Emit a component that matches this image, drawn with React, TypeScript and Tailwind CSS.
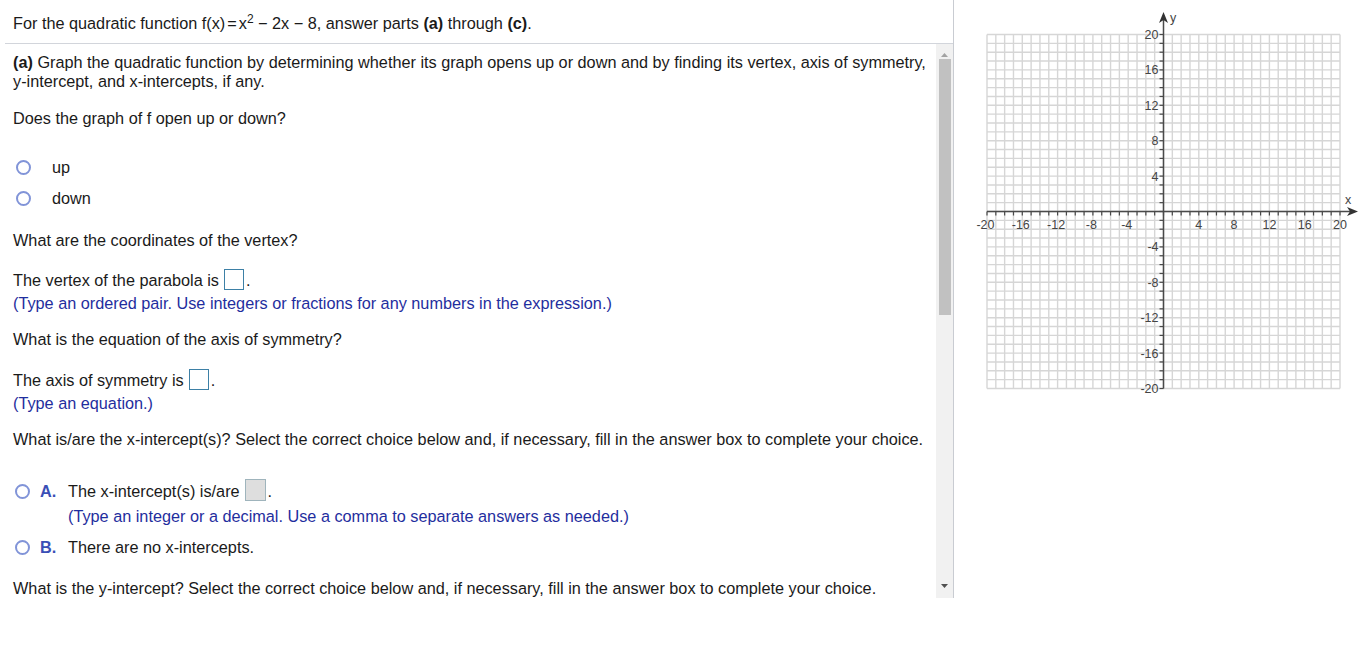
import React from "react";

const U = 8.825;
const OX = 209.5;
const OY = 211.5;
const UY = 8.85;
const gx = (v: number) => OX + v * U;
const gy = (v: number) => OY - v * UY;

function Graph() {
  const range: number[] = [];
  for (let i = -20; i <= 20; i++) range.push(i);
  const xl = [-20, -16, -12, -8, -4, 4, 8, 12, 16, 20];
  return (
    <svg width="404" height="400" viewBox="0 0 404 400" className="block shrink-0">
      {range.map((i) => (
        <line key={"v" + i} x1={gx(i)} y1={gy(20)} x2={gx(i)} y2={gy(-20)} stroke="#d6d6d6" strokeWidth={1.4} />
      ))}
      {range.map((i) => (
        <line key={"h" + i} x1={gx(-20)} y1={gy(i)} x2={gx(20)} y2={gy(i)} stroke="#d6d6d6" strokeWidth={1.4} />
      ))}
      <line x1={gx(0)} y1={gy(-20)} x2={gx(0)} y2={18} stroke="#4a4a4a" strokeWidth={1.5} />
      <polygon points={`${gx(0)},12 ${gx(0) - 4.5},23 ${gx(0)},20 ${gx(0) + 4.5},23`} fill="#333" />
      <line x1={gx(-20)} y1={gy(0)} x2={398} y2={gy(0)} stroke="#4a4a4a" strokeWidth={1.5} />
      <polygon points={`404,${gy(0)} 393,${gy(0) - 4.5} 396,${gy(0)} 393,${gy(0) + 4.5}`} fill="#333" />
      {range.map((i) => (
        <line key={"tx" + i} x1={gx(i)} y1={gy(0)} x2={gx(i)} y2={gy(0) + 4} stroke="#4a4a4a" strokeWidth={1.2} />
      ))}
      {range.map((i) => (
        <line key={"ty" + i} x1={gx(0) - 4} y1={gy(i)} x2={gx(0)} y2={gy(i)} stroke="#4a4a4a" strokeWidth={1.2} />
      ))}
      {xl.map((v) => (
        <text
          key={"lx" + v}
          x={gx(v) - (v < 0 ? 1.5 : 0)}
          y={gy(0) + 17.5}
          textAnchor="middle"
          fontSize="12.5"
          fill="#444"
          fontFamily="'Liberation Sans', Arial, sans-serif"
        >
          {v}
        </text>
      ))}
      {xl.map((v) => (
        <text
          key={"ly" + v}
          x={gx(0) - 5}
          y={gy(v) + 4.5}
          textAnchor="end"
          fontSize="12.5"
          fill="#444"
          fontFamily="'Liberation Sans', Arial, sans-serif"
        >
          {v}
        </text>
      ))}
      <text x={394} y={204} textAnchor="middle" fontSize="12.5" fill="#444" fontFamily="'Liberation Sans', Arial, sans-serif">
        x
      </text>
      <text x={219} y={22} textAnchor="middle" fontSize="12.5" fill="#444" fontFamily="'Liberation Sans', Arial, sans-serif">
        y
      </text>
    </svg>
  );
}

function Radio() {
  return <span className="block w-[15px] h-[15px] rounded-full border-2 border-[#8194d8] bg-white shrink-0" />;
}

function AnswerBox() {
  return <span className="inline-block w-[20px] h-[21px] border border-[#3d80a6] bg-white -mt-[2px] ml-[5px] shrink-0" />;
}

export default function App() {
  return (
    <div className="flex w-[1358px] h-[662px] bg-white font-['Liberation_Sans',Arial,sans-serif] text-[16.25px] leading-[19px] text-[#1a1a1a]">
      <div className="w-[954px] h-[598px] border-r border-[#c9ccd2] flex flex-col shrink-0">
        <div className="h-[43px] pt-[14px] pl-[13px] whitespace-nowrap">
          For the quadratic function f(x)<span className="mx-[2px]">=</span>x<sup className="text-[12px]">2</sup> − 2x − 8, answer parts <b>(a)</b> through <b>(c)</b>.
        </div>
        <div className="ml-[5px] border-t border-[#d2d5db] flex flex-1 min-h-0">
          <div className="flex-1 pl-[8px] pt-[9px] flex flex-col whitespace-nowrap">
            <div>
              <b>(a)</b> Graph the quadratic function by determining whether its graph opens up or down and by finding its vertex, axis of symmetry,
              <br />
              y-intercept, and x-intercepts, if any.
            </div>
            <div className="mt-[18px]">Does the graph of f open up or down?</div>
            <div className="mt-[30px] flex items-center h-[19px]">
              <span className="ml-[3px]"><Radio /></span>
              <span className="ml-[21px]">up</span>
            </div>
            <div className="mt-[12px] flex items-center h-[19px]">
              <span className="ml-[3px]"><Radio /></span>
              <span className="ml-[21px]">down</span>
            </div>
            <div className="mt-[23px]">What are the coordinates of the vertex?</div>
            <div className="mt-[21px] flex items-start h-[19px]">
              <span>The vertex of the parabola is</span>
              <AnswerBox />
              <span className="ml-[2px]">.</span>
            </div>
            <div className="mt-[4px] text-[#1f2e9e]">(Type an ordered pair. Use integers or fractions for any numbers in the expression.)</div>
            <div className="mt-[17px]">What is the equation of the axis of symmetry?</div>
            <div className="mt-[22px] flex items-start h-[19px]">
              <span>The axis of symmetry is</span>
              <AnswerBox />
              <span className="ml-[2px]">.</span>
            </div>
            <div className="mt-[4px] text-[#1f2e9e]">(Type an equation.)</div>
            <div className="mt-[17px]">
              What is/are the x-intercept(s)? Select the correct choice below and, if necessary, fill in the answer box to complete your choice.
            </div>
            <div className="mt-[33px] flex items-start h-[19px]">
              <span className="ml-[2px] mt-[2px]"><Radio /></span>
              <span className="ml-[10px] w-[28px] font-bold text-[#3a4fb6]">A.</span>
              <span>The x-intercept(s) is/are</span>
              <span className="inline-block w-[21px] h-[22px] border border-[#9fb4bc] bg-[#dedede] -mt-[3px] ml-[5px] shrink-0" />
              <span className="ml-[2px]">.</span>
            </div>
            <div className="mt-[6px] pl-[55px] text-[#1f2e9e]">(Type an integer or a decimal. Use a comma to separate answers as needed.)</div>
            <div className="mt-[12px] flex items-start h-[19px]">
              <span className="ml-[2px] mt-[2px]"><Radio /></span>
              <span className="ml-[10px] w-[28px] font-bold text-[#3a4fb6]">B.</span>
              <span>There are no x-intercepts.</span>
            </div>
            <div className="mt-[22px]">
              What is the y-intercept? Select the correct choice below and, if necessary, fill in the answer box to complete your choice.
            </div>
          </div>
          <div className="w-[17px] bg-[#f1f1f1] flex flex-col items-center shrink-0">
            <div className="h-[13px] flex items-end justify-center">
              <svg width="7" height="4" viewBox="0 0 7 4">
                <polygon points="3.5,0 7,4 0,4" fill="#a3a3a3" />
              </svg>
            </div>
            <div className="mt-[2px] w-[12px] h-[256px] bg-[#c1c1c1]" />
            <div className="flex-1" />
            <div className="h-[14px] flex items-start justify-center">
              <svg width="7" height="4" viewBox="0 0 7 4">
                <polygon points="0,0 7,0 3.5,4" fill="#505050" />
              </svg>
            </div>
          </div>
        </div>
      </div>
      <Graph />
    </div>
  );
}
